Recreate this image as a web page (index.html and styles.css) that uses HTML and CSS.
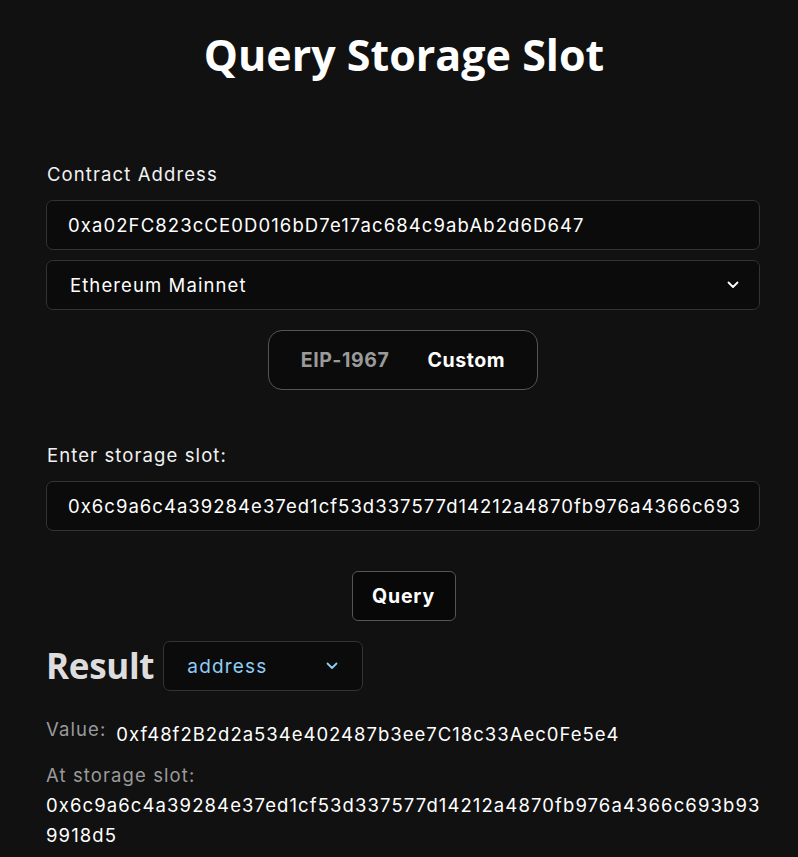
FILE: index.html
```html
<!DOCTYPE html>
<html lang="en">
<head>
<meta charset="utf-8">
<title>Query Storage Slot</title>
<link rel="stylesheet" href="styles.css">
</head>
<body>
<main class="page">
  <h1 class="title">Query Storage Slot</h1>

  <section class="form">
    <label class="label" for="addr">Contract Address</label>
    <input class="field" id="addr" type="text" readonly value="0xa02FC823cCE0D016bD7e17ac684c9abAb2d6D647">
    <div class="field select">
      <span class="select-text">Ethereum Mainnet</span>
      <svg class="chev" width="12" height="8" viewBox="0 0 12 8"><path d="M1.5 1.5 L6 6 L10.5 1.5" fill="none" stroke="#ffffff" stroke-width="1.8" stroke-linecap="round" stroke-linejoin="round"/></svg>
    </div>

    <div class="toggle-row">
      <div class="toggle">
        <span class="tab tab-off">EIP-1967</span>
        <span class="tab tab-on">Custom</span>
      </div>
    </div>

    <label class="label label-slot" for="slot">Enter storage slot:</label>
    <input class="field field-slot" id="slot" type="text" readonly value="0x6c9a6c4a39284e37ed1cf53d337577d14212a4870fb976a4366c693b939918d5">

    <div class="btn-row"><button class="btn">Query</button></div>
  </section>

  <section class="result">
    <div class="result-head">
      <h2 class="result-title">Result</h2>
      <div class="type-select">
        <span class="type-text">address</span>
        <svg class="chev" width="12" height="8" viewBox="0 0 12 8"><path d="M1.5 1.5 L6 6 L10.5 1.5" fill="none" stroke="#8ecdf7" stroke-width="1.8" stroke-linecap="round" stroke-linejoin="round"/></svg>
      </div>
    </div>
    <div class="value-row">
      <span class="muted">Value:</span>
      <span class="value">0xf48f2B2d2a534e402487b3ee7C18c33Aec0Fe5e4</span>
    </div>
    <div class="muted slot-label">At storage slot:</div>
    <div class="slot-value">0x6c9a6c4a39284e37ed1cf53d337577d14212a4870fb976a4366c693b939918d5</div>
  </section>
</main>
</body>
</html>
```

FILE: styles.css
```css
* { box-sizing: border-box; }
html, body { margin: 0; padding: 0; }
body {
  background: #111111;
  color: #ffffff;
  font-family: "Inter", "Noto Sans", sans-serif;
  letter-spacing: 1.1px;
  width: 798px;
  height: 857px;
  overflow: hidden;
}
.page {
  padding: 0 38px 0 46px;
}
.title {
  margin: 0;
  padding-top: 26px;
  text-align: center;
  font-family: "Open Sans", "Noto Sans", sans-serif;
  font-weight: 700;
  font-size: 43px;
  line-height: 58px;
  letter-spacing: 0;
  padding-left: 2px;
}
.form {
  margin-top: 77px;
  display: flex;
  flex-direction: column;
}
.label {
  display: block;
  font-size: 18.5px;
  line-height: 26px;
  color: #f2f2f2;
  padding-left: 1px;
  margin-bottom: 13px;
}
.field {
  width: 100%;
  height: 50px;
  border: 1px solid #333333;
  border-radius: 7px;
  background: #0b0b0b;
  color: #ffffff;
  display: flex;
  align-items: center;
  padding: 0 20px 0 21px;
  font-family: inherit;
  font-size: 18.5px;
  letter-spacing: 1.1px;
  outline: none;
  margin: 0;
}
.field-slot { letter-spacing: 1.03px; padding-right: 18px; }
.select {
  margin-top: 10px;
  justify-content: space-between;
  padding: 0 20px 0 23px;
}
.chev { flex: none; }
.toggle-row {
  display: flex;
  justify-content: center;
  margin-top: 20px;
}
.toggle {
  width: 270px;
  height: 60px;
  border: 1px solid #555555;
  border-radius: 14px;
  background: #0b0b0b;
  display: flex;
  align-items: center;
  justify-content: center;
  gap: 38px;
  font-weight: 700;
  font-size: 19.5px;
  letter-spacing: 0.6px;
}
.tab-off { color: #9a9a9a; }
.tab-on { color: #ffffff; }
.label-slot { margin-top: 52px; }
.btn-row {
  display: flex;
  justify-content: center;
  margin-top: 40px;
  padding-left: 1px;
}
.btn {
  width: 104px;
  height: 50px;
  border: 1px solid #555555;
  border-radius: 6px;
  background: #080808;
  color: #ffffff;
  font-family: inherit;
  font-weight: 700;
  font-size: 19.5px;
  letter-spacing: 0.8px;
}
.result { margin-top: 20px; }
.result-head {
  display: flex;
  align-items: center;
  gap: 9px;
}
.result-title {
  margin: 0;
  font-family: "Open Sans", "Noto Sans", sans-serif;
  font-weight: 700;
  font-size: 35px;
  letter-spacing: -0.3px;
  color: #dddddd;
  line-height: 50px;
}
.type-select {
  width: 200px;
  height: 50px;
  border: 1px solid #333333;
  border-radius: 7px;
  background: #0b0b0b;
  display: flex;
  align-items: center;
  justify-content: space-between;
  padding: 0 24px 0 23px;
  font-size: 19px;
  letter-spacing: 1.2px;
  color: #8ecdf7;
}
.value-row {
  margin-top: 27px;
  display: flex;
  align-items: baseline;
  gap: 10px;
}
.muted { color: #9a9a9a; font-size: 18.5px; }
.value { font-size: 18.5px; position: relative; top: 5px; letter-spacing: 1px; }
.slot-label { margin-top: 20px; line-height: 30px; }
.slot-value {
  font-size: 18.5px;
  line-height: 30px;
  word-break: break-all;
  width: 724px;
}
```
